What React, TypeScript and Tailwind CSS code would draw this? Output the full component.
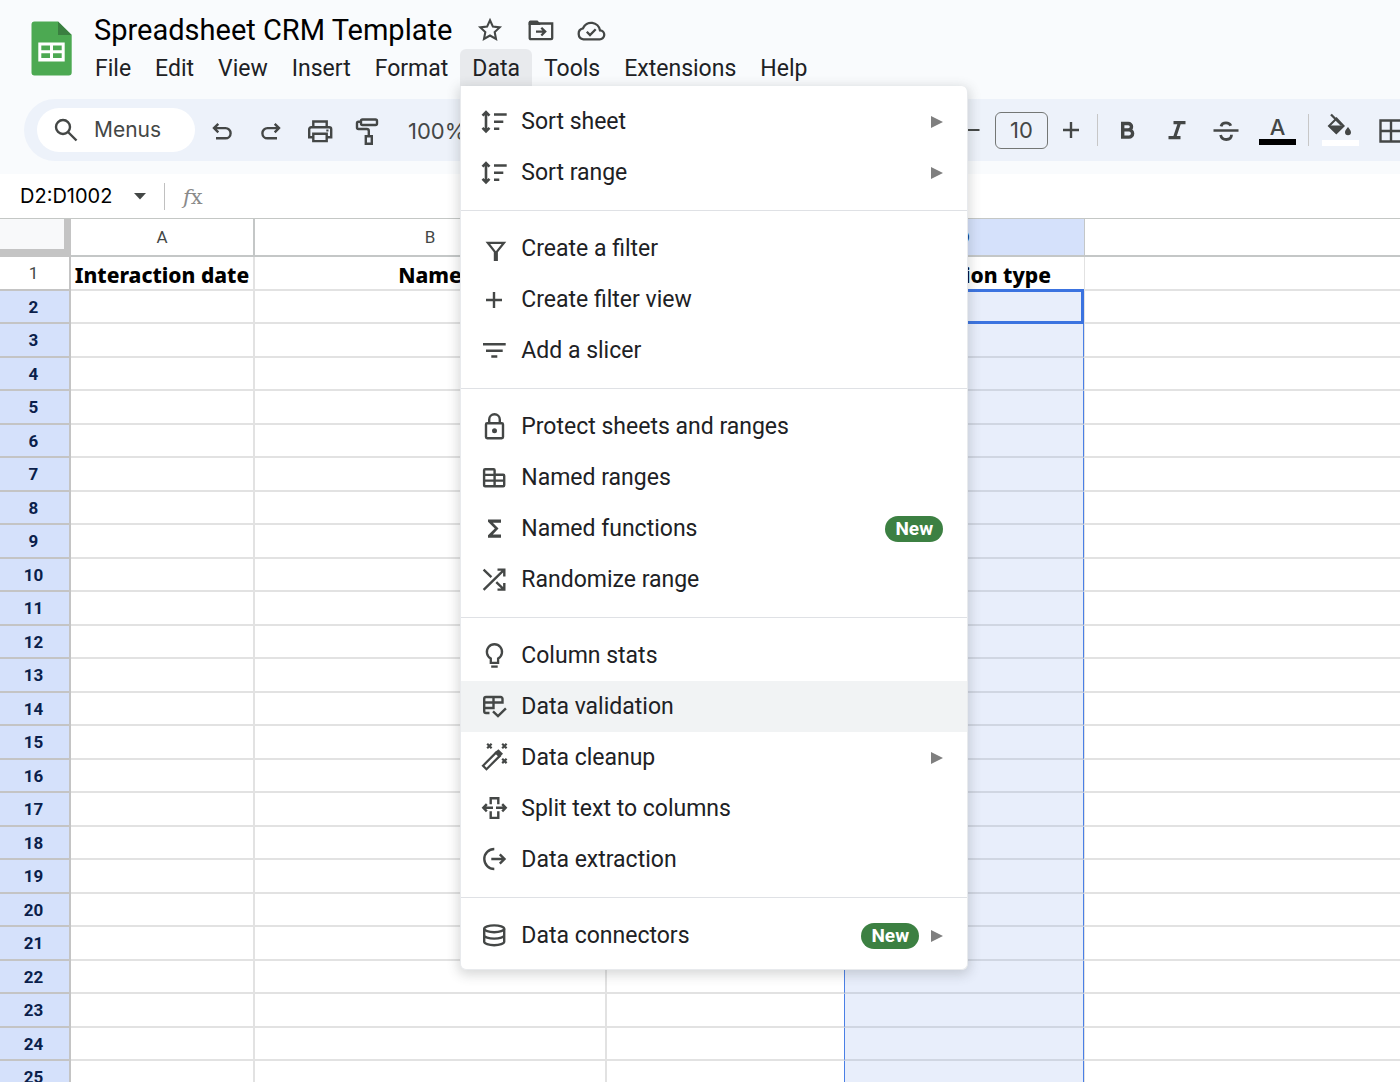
import type { ReactNode } from "react";

function Icon({ children, size = 28, sw = 2.4 }: { children: ReactNode; size?: number; sw?: number }) {
  return (
    <svg
      width={size}
      height={size}
      viewBox="0 0 28 28"
      fill="none"
      stroke="currentColor"
      strokeWidth={sw}
      className="shrink-0 overflow-visible"
      aria-hidden="true"
    >
      {children}
    </svg>
  );
}

const SortIcon = () => (
  <Icon>
    <path d="M6 5v17.500M2.500 7.700 6 4.200l3.500 3.500M2.500 19.800 6 23.300l3.500-3.500M14 6.500h12.700M14 13.800h9.300M14 20.800h5.300" strokeWidth="2.600" />
  </Icon>
);
const FilterIcon = () => (
  <Icon sw={2.2}>
    <path d="M7.800 7.800H24l-7.200 9V25h-1.900v-8.200z" />
  </Icon>
);
const PlusIcon = () => (
  <Icon>
    <path d="M14 6v16M6 14h16" />
  </Icon>
);
const SlicerIcon = () => (
  <Icon>
    <path d="M3 7.300h22.700M6 13.700h16.700M11.300 19.500h6" />
  </Icon>
);
const LockIcon = () => (
  <Icon>
    <rect x="6" y="10.300" width="17" height="15" rx="1.200" />
    <path d="M9.200 10V6.500a5.300 5.300 0 0 1 10.600 0V10" />
    <circle cx="14.500" cy="17.800" r="2.500" fill="currentColor" stroke="none" />
  </Icon>
);
const NamedRangesIcon = () => (
  <Icon>
    <path d="M4.100 6.300a1 1 0 0 1 1-1h8.500a1 1 0 0 1 1 1v4.400h8.600a1 1 0 0 1 1 1v9.600a1 1 0 0 1-1 1H5.100a1 1 0 0 1-1-1zM4 10.900h10.600v11.400M4 16.600h20" />
  </Icon>
);
const SigmaIcon = () => (
  <Icon>
    <path
      d="M21 4.500H8v2.300l6.800 6.700L8 20.300v2.400h13v-3.300h-8.200l5.700-5.900-5.700-5.700H21z"
      fill="currentColor"
      stroke="none"
    />
  </Icon>
);
const ShuffleIcon = () => (
  <Icon>
    <path d="M3.600 23.800 24 3.900M17.500 3.600h6.800v6.800M3.600 3.600l7.800 7.600M16.300 16.100l7.500 7.300M24.300 16.900v6.700h-6.800" />
  </Icon>
);
const BulbIcon = () => (
  <Icon sw={2.3}>
    <path d="M10.800 20.800v-4.300a7.600 7.600 0 1 1 7.300 0v4.300z" />
    <path d="M11.200 24.600h6.500" />
  </Icon>
);
const ValidationIcon = () => (
  <Icon>
    <path d="M9.500 20H6a1.800 1.800 0 0 1-1.800-1.800V5.800A1.800 1.800 0 0 1 6 4h14.700a1.800 1.800 0 0 1 1.800 1.800v3.700H4.200M4.200 15H13.500V4" />
    <path d="m13 18.300 5 4.800 7.900-7.700" />
  </Icon>
);
const WandIcon = () => (
  <Icon sw={2.200}>
    <path d="M3 21.700 16.300 8.400l3.500 3.500L6.500 25.200z" />
    <path d="M14.600 8.800 18.400 5.200l4.600 4.600-3.800 3.700z" fill="currentColor" stroke="none" />
    <path d="m7.200-.200 4.400 4.400m0-4.400L7.200 4.200M22.200-.200l4.400 4.400m0-4.400-4.400 4.400M22.200 14.700l4.400 4.400m0-4.400-4.400 4.400" />
  </Icon>
);
const SplitIcon = () => (
  <Icon>
    <path d="M10.700 9.300V3.200h7.600v6.100M10.700 16.200v6.700h7.600v-6.700M13 12.800H3.500M6.800 9.200l-3.500 3.600 3.500 3.600M16 12.800h9.500M22.200 9.200l3.500 3.600-3.500 3.600" />
  </Icon>
);
const ExtractIcon = () => (
  <Icon>
    <path d="M14.300 3a10 10 0 0 0 0 20M11.300 13h13M19.800 8.300l4.700 4.700-4.700 4.700" />
  </Icon>
);
const DatabaseIcon = () => (
  <Icon>
    <ellipse cx="14.200" cy="6.800" rx="10" ry="3.400" />
    <path d="M4.200 6.800v13c0 1.900 4.500 3.400 10 3.400s10-1.500 10-3.400v-13M4.200 13.200c0 1.900 4.500 3.400 10 3.400s10-1.500 10-3.400" />
  </Icon>
);

type Item = { label: string; icon: ReactNode; sub?: boolean; isNew?: boolean; active?: boolean };

const groups: Item[][] = [
  [
    { label: "Sort sheet", icon: <SortIcon />, sub: true },
    { label: "Sort range", icon: <SortIcon />, sub: true },
  ],
  [
    { label: "Create a filter", icon: <FilterIcon /> },
    { label: "Create filter view", icon: <PlusIcon /> },
    { label: "Add a slicer", icon: <SlicerIcon /> },
  ],
  [
    { label: "Protect sheets and ranges", icon: <LockIcon /> },
    { label: "Named ranges", icon: <NamedRangesIcon /> },
    { label: "Named functions", icon: <SigmaIcon />, isNew: true },
    { label: "Randomize range", icon: <ShuffleIcon /> },
  ],
  [
    { label: "Column stats", icon: <BulbIcon /> },
    { label: "Data validation", icon: <ValidationIcon />, active: true },
    { label: "Data cleanup", icon: <WandIcon />, sub: true },
    { label: "Split text to columns", icon: <SplitIcon /> },
    { label: "Data extraction", icon: <ExtractIcon /> },
  ],
  [{ label: "Data connectors", icon: <DatabaseIcon />, sub: true, isNew: true }],
];

function DataMenu() {
  return (
    <div
      role="menu"
      aria-label="Data"
      className="absolute top-full left-0 z-20 w-[508px] rounded-b-md rounded-tr-md border border-t-0 border-[#e8eaed] bg-white pt-[10px] pb-2 shadow-[0_3px_12px_2px_rgba(60,64,67,0.2)]"
    >
      {groups.map((items, g) => (
        <div key={g} role="group" className={g ? "mt-3 border-t border-[#dfe1e5] pt-3" : ""}>
          {items.map((it) => (
            <button
              key={it.label}
              role="menuitem"
              className={
                "flex h-[51px] w-full items-center pr-6 pl-[19px] text-left text-[#202124] " +
                (it.active ? "bg-[#f1f3f4]" : "")
              }
            >
              <span className="text-[#444746]">{it.icon}</span>
              <span className="ml-[13px] flex-1 font-['Roboto',sans-serif] text-[23px] leading-7">{it.label}</span>
              {it.isNew && (
                <span className="w-[58px] rounded-full bg-[#3c8042] text-center font-['Roboto',sans-serif] text-[19px] leading-[26px] font-bold text-white">
                  New
                </span>
              )}
              {it.sub && (
                <svg width="12" height="12" viewBox="0 0 12 12" className="ml-3 shrink-0 text-[#7f7f7f]" aria-hidden="true">
                  <path d="M0 0 12 6 0 12z" fill="currentColor" />
                </svg>
              )}
            </button>
          ))}
        </div>
      ))}
    </div>
  );
}

const menus = ["File", "Edit", "View", "Insert", "Format", "Data", "Tools", "Extensions", "Help"];

function Header() {
  return (
    <div className="flex pl-[31px] text-[#444746]">
      <svg width="41" height="55" viewBox="0 0 41 55" className="mt-[21px] shrink-0" aria-label="Sheets">
        <path d="M3.500.5H27l13.700 13.500v37.500a3 3 0 0 1-3 3H3.500a3 3 0 0 1-3-3v-48a3 3 0 0 1 3-3z" fill="#4ca952" />
        <path d="M27 .500 40.700 14H27z" fill="#3a7f40" />
        <path
          d="M7.300 21.500h26.400v18.900H7.300zM10.300 24.500v4.700h8.700v-4.700zM22 24.500v4.700h8.700v-4.700zM10.300 32.300v4.800h8.700v-4.800zM22 32.300v4.800h8.700v-4.800z"
          fill="#fff"
          fillRule="evenodd"
        />
      </svg>
      <div className="ml-[11px] flex flex-col">
        <div className="flex h-[49px] items-center pt-[11px] pl-[11px]">
          <h1 className="w-[383px] font-['Roboto',sans-serif] text-[29px] leading-9 whitespace-nowrap text-black">
            Spreadsheet CRM Template
          </h1>
          <button aria-label="Star" className="flex w-[26px] justify-center">
            <Icon sw={2.1}>
              <path d="m14 4.300 2.900 6.300 6.800.8-5 4.700 1.300 6.800-6-3.400-6 3.400 1.300-6.800-5-4.700 6.800-.8z" />
            </Icon>
          </button>
          <button aria-label="Move" className="ml-6 flex w-7 justify-center">
            <Icon sw={2.3}>
              <path d="M2.700 7.500h22.500v14.700a1 1 0 0 1-1 1H3.700a1 1 0 0 1-1-1z" />
              <path d="M1.700 9V6a1.600 1.600 0 0 1 1.600-1.500h7.200l2.800 3v1.500z" fill="currentColor" stroke="none" />
              <path d="M9 15.600h8.500M14.300 11.700l3.900 3.900-3.900 3.900" />
            </Icon>
          </button>
          <button aria-label="See document status" className="ml-[22px] flex w-7 justify-center">
            <Icon sw={2.3}>
              <path d="M6.500 23.300h16a4.500 4.500 0 0 0 .5-9 8.900 8.900 0 0 0-17-2A5.600 5.600 0 0 0 6.500 23.300z" />
              <path d="m9.800 15.800 3.200 3.200 5.700-5.700" />
            </Icon>
          </button>
        </div>
        <nav className="flex" aria-label="Menu bar">
          {menus.map((m) => (
            <div key={m} className="relative">
              <button
                className={
                  "h-[37px] px-3 pt-[2px] font-['Roboto',sans-serif] text-[23px] leading-7 text-[#202124] " +
                  (m === "Data" ? "rounded-t-md bg-[#e8eaed]" : "")
                }
              >
                {m}
              </button>
              {m === "Data" && <DataMenu />}
            </div>
          ))}
        </nav>
      </div>
    </div>
  );
}

function Toolbar() {
  return (
    <div
      role="toolbar"
      aria-label="Main"
      className="my-[13px] ml-6 flex h-[62px] items-center overflow-hidden rounded-l-full bg-[#edf2fa] pl-[13px] text-[#444746]"
    >
      <button className="flex h-11 w-[158px] shrink-0 items-center rounded-full bg-white pl-[15px] font-['Inter',sans-serif] text-[21px] leading-7">
        <Icon>
          <circle cx="11" cy="11" r="7" />
          <path d="m16 16 8.500 8.500" />
        </Icon>
        <span className="ml-[14px]">Menus</span>
      </button>
      <div className="flex w-[770px] shrink-0 items-center pt-[2px] pl-[13px]">
        <button aria-label="Undo">
          <Icon>
            <path d="M10.300 6.800 6 11.100l4.300 4.300M6.200 11.100H17.500a5 5 0 0 1 0 10.200H8" />
          </Icon>
        </button>
        <button aria-label="Redo" className="ml-[21px]">
          <Icon>
            <path d="m17.700 6.800 4.300 4.300-4.300 4.300M21.800 11.100H10.500a5 5 0 0 0 0 10.200h9.500" />
          </Icon>
        </button>
        <button aria-label="Print" className="ml-[21px]">
          <Icon>
            <path d="M7.300 10.300V4.500h13.400v5.800M7.300 20.300H3.200v-8a2 2 0 0 1 2-2h18a2 2 0 0 1 2 2v8h-4.500" />
            <path d="M7.300 16.800h13.400v7.300H7.300z" />
            <path d="M20.300 13.500h2.200" strokeWidth="1.800" />
          </Icon>
        </button>
        <button aria-label="Paint format" className="ml-5">
          <Icon>
            <path d="M8.500 2.500h13a1.500 1.500 0 0 1 1.500 1.500v2.500a1.500 1.500 0 0 1-1.500 1.500h-13A1.500 1.500 0 0 1 7 6.500V4a1.500 1.500 0 0 1 1.500-1.500zM7 4.800H4.500A1.500 1.500 0 0 0 3 6.300v4.200A1.500 1.500 0 0 0 4.500 12h8.300a2 2 0 0 1 2 2v5.300M11.800 19.300h6v7.500h-6z" />
          </Icon>
        </button>
        <button className="ml-[26px] font-['Inter',sans-serif] text-[22px] leading-7">100%</button>
      </div>
      <button aria-label="Decrease font size" className="shrink-0">
        <svg width="16" height="16" viewBox="0 0 16 16" stroke="currentColor" strokeWidth="2.200">
          <path d="M0 8h14.500" />
        </svg>
      </button>
      <input
        aria-label="Font size"
        defaultValue="10"
        className="ml-[14px] h-[37px] w-[53px] shrink-0 rounded-md border border-[#747775] bg-transparent text-center font-['Inter',sans-serif] text-[22px]"
      />
      <button aria-label="Increase font size" className="ml-[9px] shrink-0">
        <Icon>
          <path d="M14 6v16M6 14h16" />
        </Icon>
      </button>
      <div className="ml-3 h-8 w-px shrink-0 bg-[#c7c7c7]" />
      <button aria-label="Bold" className="ml-[15px] shrink-0">
        <Icon sw={3.4}>
          <path d="M9.700 7.500h5.600a3.200 3.200 0 0 1 0 6.400H9.700zM9.700 13.900h6.300a3.600 3.600 0 0 1 0 7.200H9.700z" />
        </Icon>
      </button>
      <button aria-label="Italic" className="ml-[22px] shrink-0">
        <Icon sw={3.200}>
          <path d="M10.500 6.700h12M5.500 21.700h12M16.500 6.700 11.500 21.700" />
        </Icon>
      </button>
      <button aria-label="Strikethrough" className="ml-[21px] shrink-0">
        <Icon>
          <path d="M1.500 14.500h25" />
          <path d="M9 10.300c.7-2.400 2.700-3.400 5-3.400 2.400 0 4.100 1.200 4.800 2.900M8.600 19c.6 2.800 2.900 4.500 5.700 4.500 3.100 0 5.200-1.800 5.200-4.700" strokeWidth="2.800" />
        </Icon>
      </button>
      <button aria-label="Text color" className="ml-[19px] flex w-[37px] shrink-0 flex-col items-center">
        <span className="font-['Inter',sans-serif] text-[22px] leading-[23px] font-medium">A</span>
        <span className="h-[6px] w-full bg-black" />
      </button>
      <div className="ml-3 h-8 w-px shrink-0 bg-[#c7c7c7]" />
      <button aria-label="Fill color" className="ml-[13px] flex w-[37px] shrink-0 flex-col items-center">
        <svg width="28" height="25" viewBox="1 2 28 25" className="overflow-visible" aria-hidden="true">
          <path d="M5 1.500 15.800 12.300" stroke="currentColor" strokeWidth="2.300" />
          <path d="M10.500 5.500 3 13l7.300 7.200L17.600 13z" fill="none" stroke="currentColor" strokeWidth="2" />
          <path d="M2.300 12.500h16l-8 8.300z" fill="currentColor" />
          <path d="M22 14s-3 3.300-3 5.200a3 3 0 0 0 6 0C25 17.300 22 14 22 14z" fill="currentColor" />
        </svg>
        <span className="h-[6px] w-full bg-white" />
      </button>
      <button aria-label="Borders" className="ml-[18px] shrink-0">
        <Icon>
          <path d="M3.500 4.500h21v21h-21zM14 4.500v21M3.500 15h21" />
        </Icon>
      </button>
    </div>
  );
}

function FormulaBar() {
  return (
    <div className="flex h-[45px] items-center border-b border-[#c4c7c5] bg-white pl-5">
      <input
        aria-label="Name box"
        defaultValue="D2:D1002"
        className="w-[114px] font-['Inter',sans-serif] text-[20px] leading-6 text-black"
      />
      <svg width="12" height="7" viewBox="0 0 12 7" className="text-[#444746]" aria-hidden="true">
        <path d="M0 0h12L6 6.500z" fill="currentColor" />
      </svg>
      <div className="ml-[18px] h-[27px] w-px bg-[#c0c0c0]" />
      <span className="ml-[18px] pt-[2px] font-['DejaVu_Serif',serif] text-[21px] leading-7 text-[#8a8a8a]">
        <i>f</i>x
      </span>
      <input aria-label="Formula" className="ml-4 h-full flex-1 outline-none" />
    </div>
  );
}

const rows = Array.from({ length: 25 }, (_, i) => i + 1);
const labelCell =
  "border-b-2 border-[#e2e2e2] p-0 pt-[3px] text-center font-['Noto_Sans',sans-serif] text-[21px] leading-[26px] font-extrabold whitespace-nowrap text-black ";

function Sheet() {
  return (
    <table className="w-full table-fixed border-separate border-spacing-0 bg-white">
      <colgroup>
        <col className="w-[71px]" />
        <col className="w-[184px]" />
        <col className="w-[352px]" />
        <col className="w-[237px]" />
        <col className="w-[240px]" />
        <col />
      </colgroup>
      <thead>
        <tr className="h-[38px] font-['Roboto',sans-serif] text-[17px] leading-5 text-[#444746]">
          <th aria-label="Select all" className="border-r-[7px] border-b-[8px] border-[#c4c4c4] bg-[#f8f9fa]" />
          <th className="border-r-2 border-b-2 border-[#c4c7c7] font-normal">A</th>
          <th className="border-r-2 border-b-2 border-[#c4c7c7] font-normal">B</th>
          <th className="border-r-2 border-b-2 border-[#c4c7c7] font-normal">C</th>
          <th className="border-b-2 border-[#c4c7c7] bg-[#d5e1fb] font-bold text-[#0b1f4b]">D</th>
          <th aria-label="Empty" className="border-b-2 border-l border-[#c4c7c7]" />
        </tr>
      </thead>
      <tbody>
        {rows.map((n) => (
          <tr key={n} className={n % 2 ? "h-[34px]" : "h-[33px]"}>
            <th
              scope="row"
              className={
                "border-r-2 border-b-2 border-[#c4c4c4] p-0 pr-[2px] font-['Roboto',sans-serif] text-[17px] leading-5 " +
                (n === 1 ? "bg-white font-normal text-[#444746]" : "bg-[#d5e1fb] font-bold text-[#0b1f4b]")
              }
            >
              {n}
            </th>
            {["Interaction date", "Name", "Notes"].map((t, c) => (
              <td key={t} className={labelCell + (c < 2 ? "border-r-2" : "")}>
                {n === 1 ? t : ""}
              </td>
            ))}
            {n === 1 ? (
              <td className={labelCell}>Interaction type</td>
            ) : (
              <td className="relative border-x border-b-2 border-x-[#4a7fe5] border-b-[#d0d6e2] bg-[#e8eefb] p-0">
                {n === 2 && <div className="absolute -inset-x-px -top-[2px] -bottom-[2px] border-[3px] border-[#3b73e0]" />}
              </td>
            )}
            <td className="border-b-2 border-l border-[#e2e2e2] p-0" />
          </tr>
        ))}
      </tbody>
    </table>
  );
}

export default function App() {
  return (
    <div className="flex h-screen flex-col overflow-hidden bg-[#f9fbfd]">
      <Header />
      <Toolbar />
      <FormulaBar />
      <main className="min-h-0 flex-1 overflow-hidden">
        <Sheet />
      </main>
    </div>
  );
}
